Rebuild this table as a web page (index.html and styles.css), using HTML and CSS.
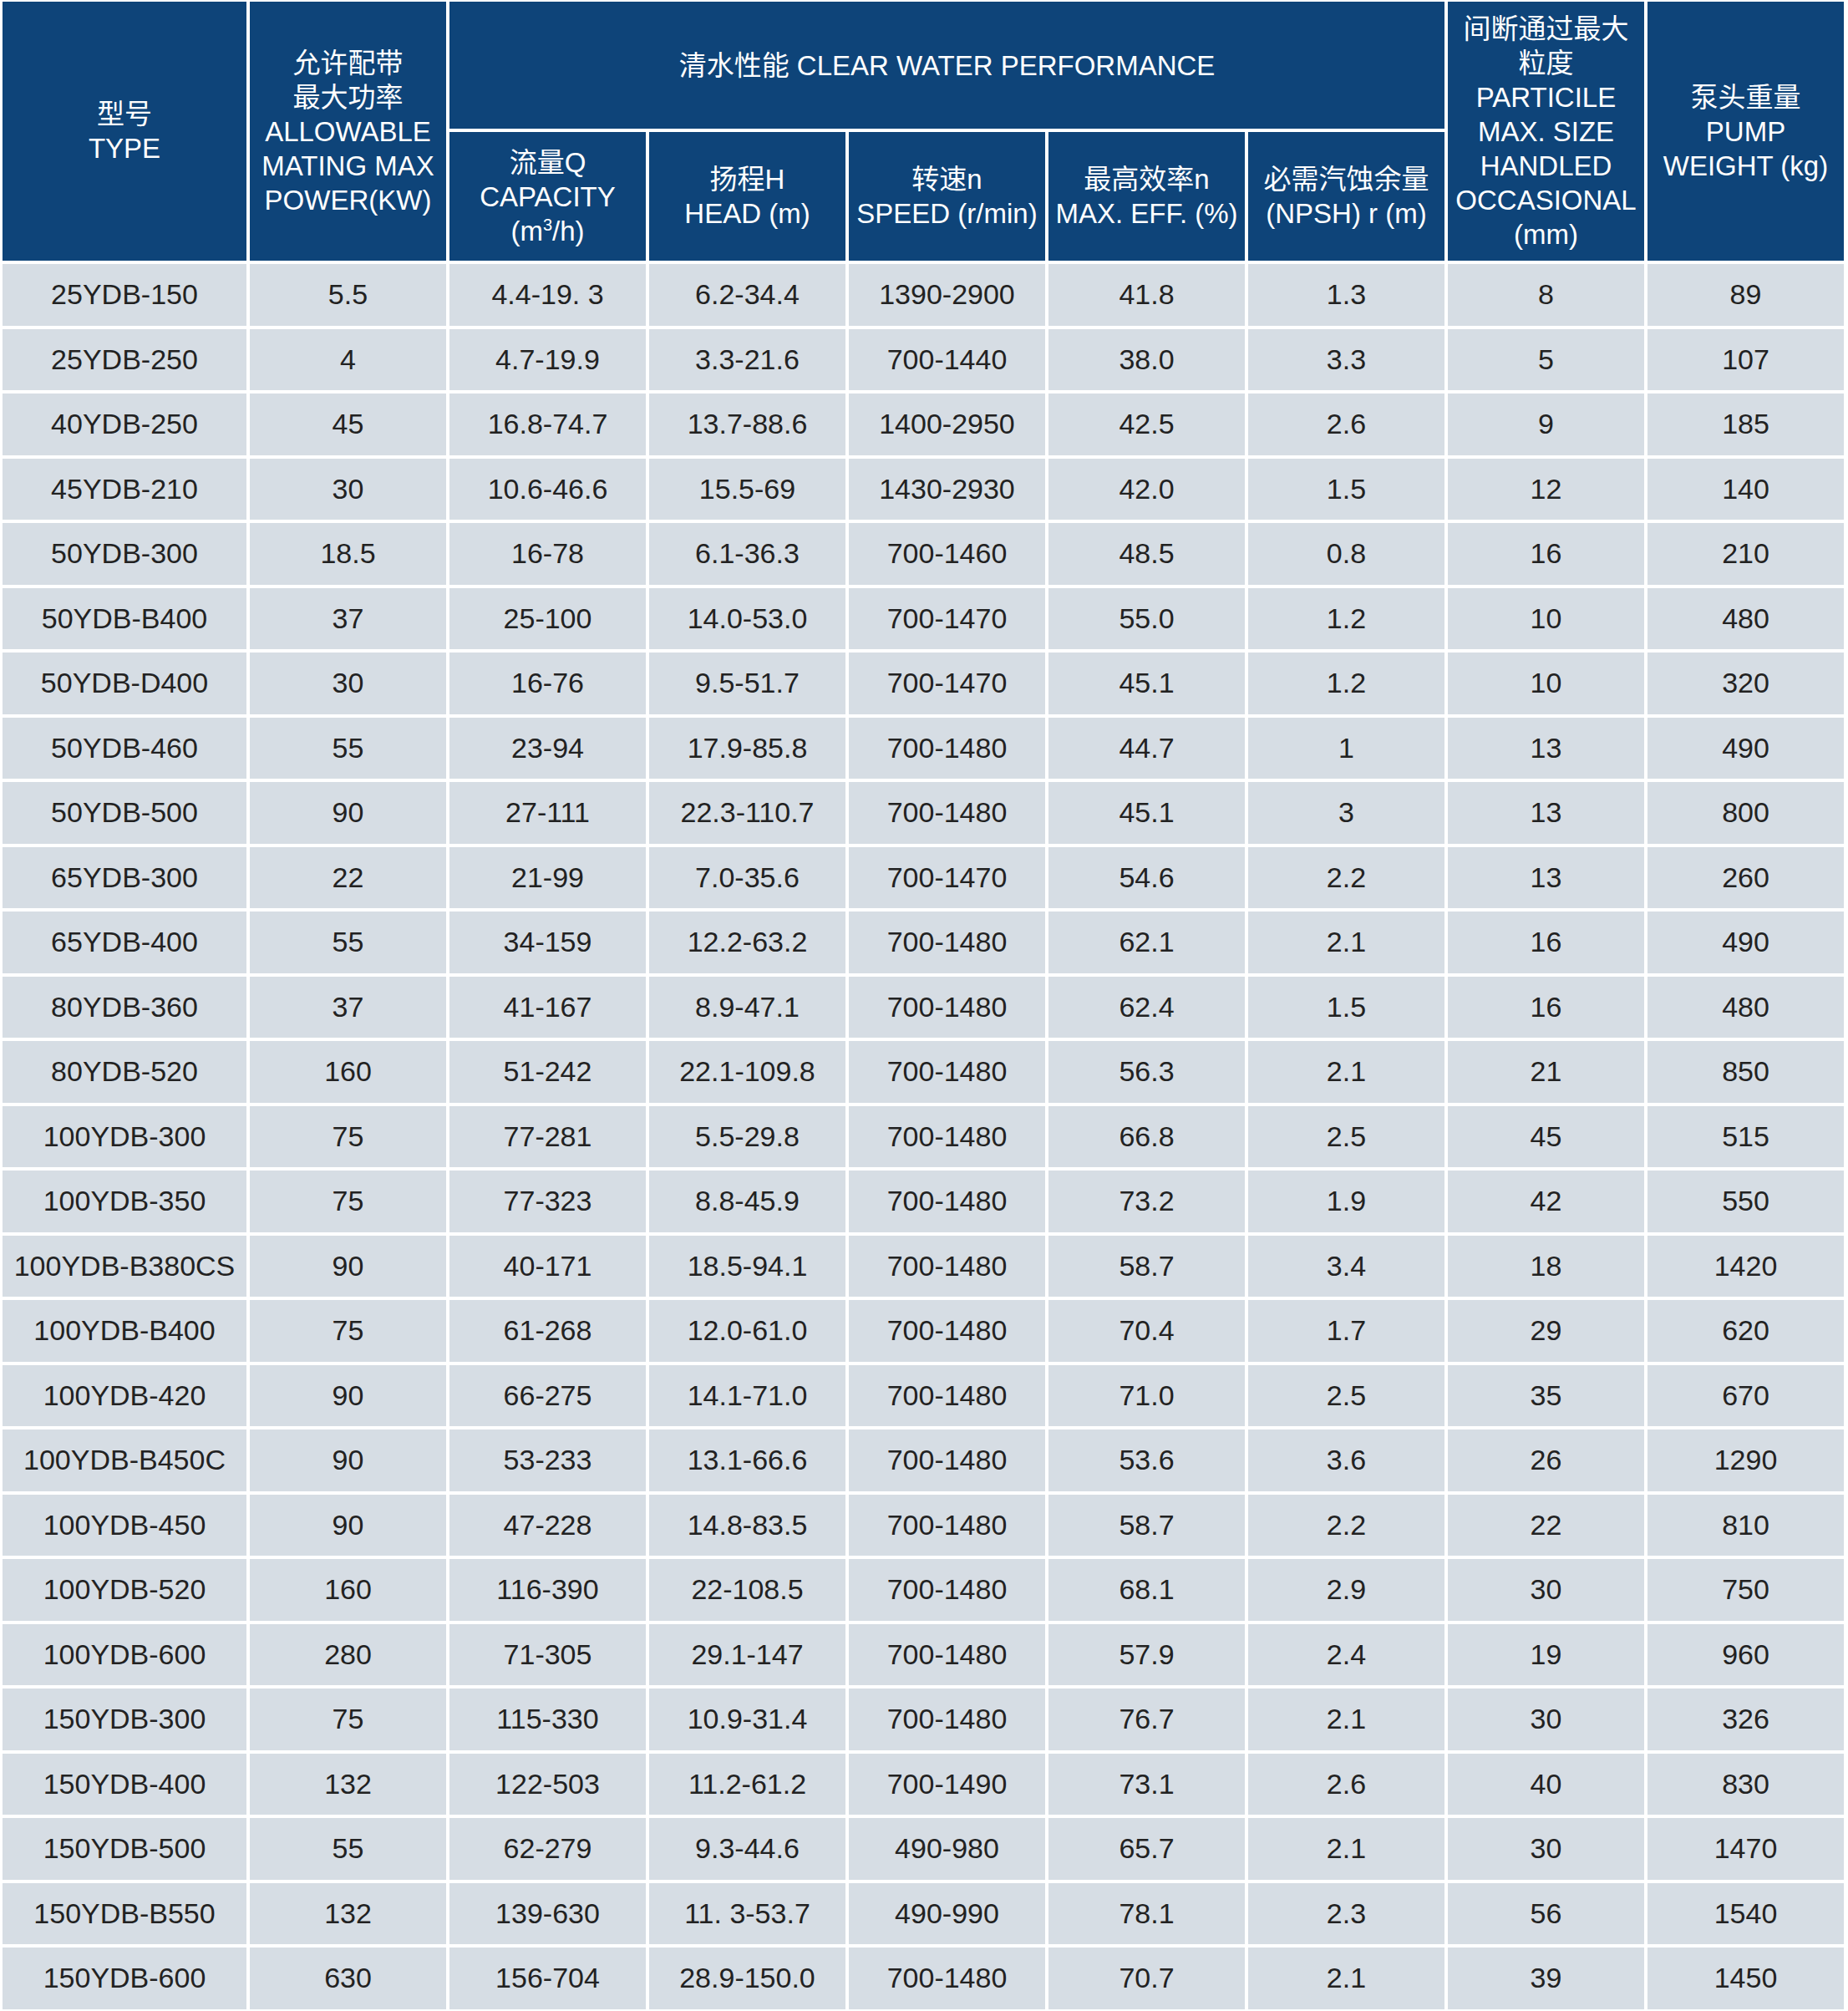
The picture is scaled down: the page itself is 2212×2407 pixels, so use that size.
FILE: index.html
```html
<!DOCTYPE html>
<html lang="zh-CN">
<head>
<meta charset="utf-8">
<title>YDB 清水性能</title>
<link rel="stylesheet" href="styles.css">
</head>
<body>
<div class="spec">
  <div class="hd col-type"><span>型号<br>TYPE</span></div>
  <div class="hd col-power"><span>允许配带<br>最大功率<br>ALLOWABLE<br>MATING MAX<br>POWER(KW)</span></div>
  <div class="hd group"><span>清水性能 CLEAR WATER PERFORMANCE</span></div>
  <div class="hd col-particle"><span>间断通过最大<br>粒度<br>PARTICILE<br>MAX. SIZE<br>HANDLED<br>OCCASIONAL<br>(mm)</span></div>
  <div class="hd col-weight"><span>泵头重量<br>PUMP<br>WEIGHT (kg)</span></div>
  <div class="hd sub sub-1"><span>流量Q<br>CAPACITY<br>(m<sup>3</sup>/h)</span></div>
  <div class="hd sub sub-2"><span>扬程H<br>HEAD (m)</span></div>
  <div class="hd sub sub-3"><span>转速n<br>SPEED (r/min)</span></div>
  <div class="hd sub sub-4"><span>最高效率n<br>MAX. EFF. (%)</span></div>
  <div class="hd sub sub-5"><span>必需汽蚀余量<br>(NPSH) r (m)</span></div>

  <div class="row"><div class="td">25YDB-150</div><div class="td">5.5</div><div class="td">4.4-19. 3</div><div class="td">6.2-34.4</div><div class="td">1390-2900</div><div class="td">41.8</div><div class="td">1.3</div><div class="td">8</div><div class="td">89</div></div>
  <div class="row"><div class="td">25YDB-250</div><div class="td">4</div><div class="td">4.7-19.9</div><div class="td">3.3-21.6</div><div class="td">700-1440</div><div class="td">38.0</div><div class="td">3.3</div><div class="td">5</div><div class="td">107</div></div>
  <div class="row"><div class="td">40YDB-250</div><div class="td">45</div><div class="td">16.8-74.7</div><div class="td">13.7-88.6</div><div class="td">1400-2950</div><div class="td">42.5</div><div class="td">2.6</div><div class="td">9</div><div class="td">185</div></div>
  <div class="row"><div class="td">45YDB-210</div><div class="td">30</div><div class="td">10.6-46.6</div><div class="td">15.5-69</div><div class="td">1430-2930</div><div class="td">42.0</div><div class="td">1.5</div><div class="td">12</div><div class="td">140</div></div>
  <div class="row"><div class="td">50YDB-300</div><div class="td">18.5</div><div class="td">16-78</div><div class="td">6.1-36.3</div><div class="td">700-1460</div><div class="td">48.5</div><div class="td">0.8</div><div class="td">16</div><div class="td">210</div></div>
  <div class="row"><div class="td">50YDB-B400</div><div class="td">37</div><div class="td">25-100</div><div class="td">14.0-53.0</div><div class="td">700-1470</div><div class="td">55.0</div><div class="td">1.2</div><div class="td">10</div><div class="td">480</div></div>
  <div class="row"><div class="td">50YDB-D400</div><div class="td">30</div><div class="td">16-76</div><div class="td">9.5-51.7</div><div class="td">700-1470</div><div class="td">45.1</div><div class="td">1.2</div><div class="td">10</div><div class="td">320</div></div>
  <div class="row"><div class="td">50YDB-460</div><div class="td">55</div><div class="td">23-94</div><div class="td">17.9-85.8</div><div class="td">700-1480</div><div class="td">44.7</div><div class="td">1</div><div class="td">13</div><div class="td">490</div></div>
  <div class="row"><div class="td">50YDB-500</div><div class="td">90</div><div class="td">27-111</div><div class="td">22.3-110.7</div><div class="td">700-1480</div><div class="td">45.1</div><div class="td">3</div><div class="td">13</div><div class="td">800</div></div>
  <div class="row"><div class="td">65YDB-300</div><div class="td">22</div><div class="td">21-99</div><div class="td">7.0-35.6</div><div class="td">700-1470</div><div class="td">54.6</div><div class="td">2.2</div><div class="td">13</div><div class="td">260</div></div>
  <div class="row"><div class="td">65YDB-400</div><div class="td">55</div><div class="td">34-159</div><div class="td">12.2-63.2</div><div class="td">700-1480</div><div class="td">62.1</div><div class="td">2.1</div><div class="td">16</div><div class="td">490</div></div>
  <div class="row"><div class="td">80YDB-360</div><div class="td">37</div><div class="td">41-167</div><div class="td">8.9-47.1</div><div class="td">700-1480</div><div class="td">62.4</div><div class="td">1.5</div><div class="td">16</div><div class="td">480</div></div>
  <div class="row"><div class="td">80YDB-520</div><div class="td">160</div><div class="td">51-242</div><div class="td">22.1-109.8</div><div class="td">700-1480</div><div class="td">56.3</div><div class="td">2.1</div><div class="td">21</div><div class="td">850</div></div>
  <div class="row"><div class="td">100YDB-300</div><div class="td">75</div><div class="td">77-281</div><div class="td">5.5-29.8</div><div class="td">700-1480</div><div class="td">66.8</div><div class="td">2.5</div><div class="td">45</div><div class="td">515</div></div>
  <div class="row"><div class="td">100YDB-350</div><div class="td">75</div><div class="td">77-323</div><div class="td">8.8-45.9</div><div class="td">700-1480</div><div class="td">73.2</div><div class="td">1.9</div><div class="td">42</div><div class="td">550</div></div>
  <div class="row"><div class="td">100YDB-B380CS</div><div class="td">90</div><div class="td">40-171</div><div class="td">18.5-94.1</div><div class="td">700-1480</div><div class="td">58.7</div><div class="td">3.4</div><div class="td">18</div><div class="td">1420</div></div>
  <div class="row"><div class="td">100YDB-B400</div><div class="td">75</div><div class="td">61-268</div><div class="td">12.0-61.0</div><div class="td">700-1480</div><div class="td">70.4</div><div class="td">1.7</div><div class="td">29</div><div class="td">620</div></div>
  <div class="row"><div class="td">100YDB-420</div><div class="td">90</div><div class="td">66-275</div><div class="td">14.1-71.0</div><div class="td">700-1480</div><div class="td">71.0</div><div class="td">2.5</div><div class="td">35</div><div class="td">670</div></div>
  <div class="row"><div class="td">100YDB-B450C</div><div class="td">90</div><div class="td">53-233</div><div class="td">13.1-66.6</div><div class="td">700-1480</div><div class="td">53.6</div><div class="td">3.6</div><div class="td">26</div><div class="td">1290</div></div>
  <div class="row"><div class="td">100YDB-450</div><div class="td">90</div><div class="td">47-228</div><div class="td">14.8-83.5</div><div class="td">700-1480</div><div class="td">58.7</div><div class="td">2.2</div><div class="td">22</div><div class="td">810</div></div>
  <div class="row"><div class="td">100YDB-520</div><div class="td">160</div><div class="td">116-390</div><div class="td">22-108.5</div><div class="td">700-1480</div><div class="td">68.1</div><div class="td">2.9</div><div class="td">30</div><div class="td">750</div></div>
  <div class="row"><div class="td">100YDB-600</div><div class="td">280</div><div class="td">71-305</div><div class="td">29.1-147</div><div class="td">700-1480</div><div class="td">57.9</div><div class="td">2.4</div><div class="td">19</div><div class="td">960</div></div>
  <div class="row"><div class="td">150YDB-300</div><div class="td">75</div><div class="td">115-330</div><div class="td">10.9-31.4</div><div class="td">700-1480</div><div class="td">76.7</div><div class="td">2.1</div><div class="td">30</div><div class="td">326</div></div>
  <div class="row"><div class="td">150YDB-400</div><div class="td">132</div><div class="td">122-503</div><div class="td">11.2-61.2</div><div class="td">700-1490</div><div class="td">73.1</div><div class="td">2.6</div><div class="td">40</div><div class="td">830</div></div>
  <div class="row"><div class="td">150YDB-500</div><div class="td">55</div><div class="td">62-279</div><div class="td">9.3-44.6</div><div class="td">490-980</div><div class="td">65.7</div><div class="td">2.1</div><div class="td">30</div><div class="td">1470</div></div>
  <div class="row"><div class="td">150YDB-B550</div><div class="td">132</div><div class="td">139-630</div><div class="td">11. 3-53.7</div><div class="td">490-990</div><div class="td">78.1</div><div class="td">2.3</div><div class="td">56</div><div class="td">1540</div></div>
  <div class="row"><div class="td">150YDB-600</div><div class="td">630</div><div class="td">156-704</div><div class="td">28.9-150.0</div><div class="td">700-1480</div><div class="td">70.7</div><div class="td">2.1</div><div class="td">39</div><div class="td">1450</div></div>
</div>
</body>
</html>
```
FILE: styles.css
```css
html, body {
  margin: 0;
  padding: 0;
  background: #ffffff;
}

body {
  font-family: "Liberation Sans", Arial, "Noto Sans CJK SC", sans-serif;
}

.spec {
  display: grid;
  grid-template-columns: 292px repeat(8, 235px);
  grid-template-rows: 152px 154px;
  grid-auto-rows: 73.5px;
  gap: 4px;
  padding: 2px 3px 4px 3px;
  width: max-content;
}

.row {
  display: contents;
}

.hd {
  background: #0e4479;
  color: #ffffff;
  font-size: 33px;
  line-height: 41px;
  display: flex;
  align-items: center;
  justify-content: center;
  text-align: center;
  white-space: nowrap;
}

.hd sup {
  font-size: 20px;
  line-height: 0;
  vertical-align: 12px;
}

.col-type     { grid-column: 1; grid-row: 1 / span 2; }
.col-power    { grid-column: 2; grid-row: 1 / span 2; }
.group        { grid-column: 3 / span 5; grid-row: 1; }
.col-particle { grid-column: 8; grid-row: 1 / span 2; }
.col-weight   { grid-column: 9; grid-row: 1 / span 2; }
.sub-1 { grid-column: 3; grid-row: 2; }
.sub-2 { grid-column: 4; grid-row: 2; }
.sub-3 { grid-column: 5; grid-row: 2; }
.sub-4 { grid-column: 6; grid-row: 2; }
.sub-5 { grid-column: 7; grid-row: 2; }

.td {
  background: #d6dde4;
  color: #222222;
  font-size: 34px;
  display: flex;
  align-items: center;
  justify-content: center;
  white-space: nowrap;
}
```
